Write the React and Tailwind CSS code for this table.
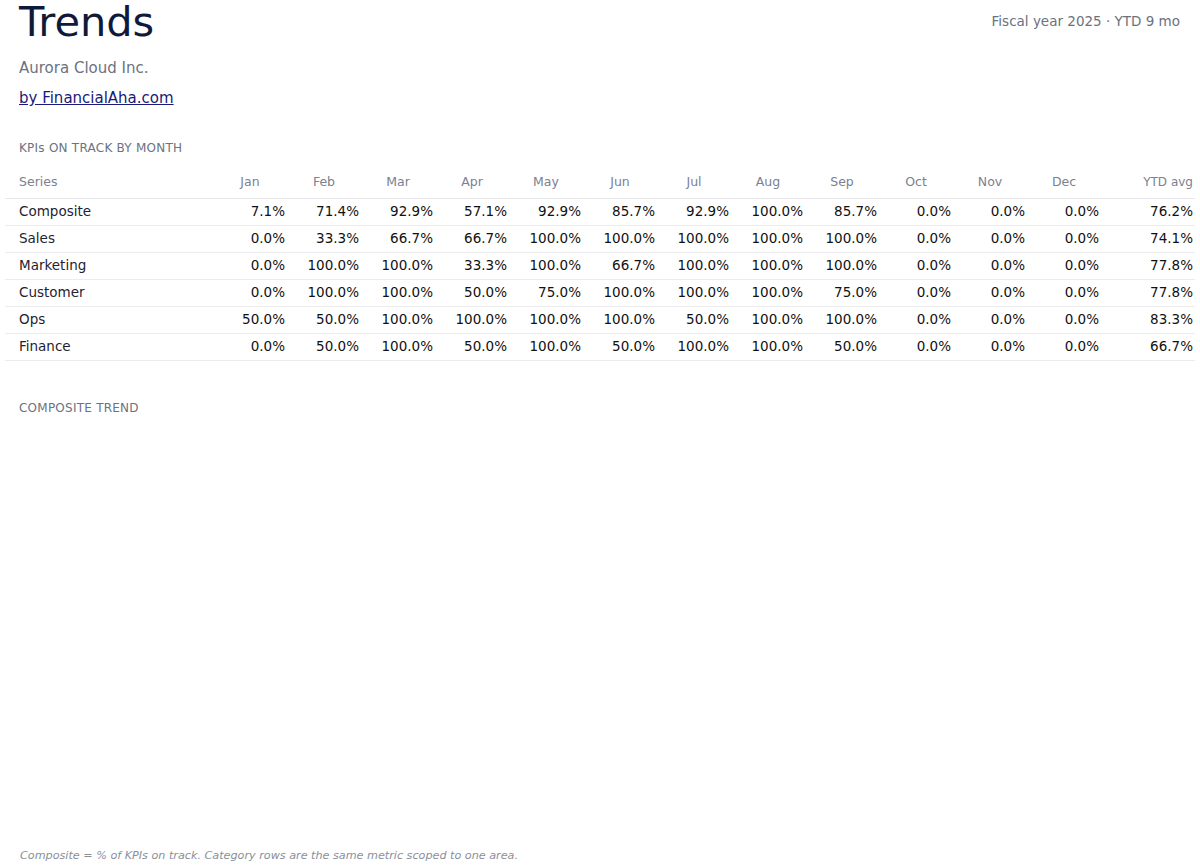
import React from "react";

const months = ["Jan","Feb","Mar","Apr","May","Jun","Jul","Aug","Sep","Oct","Nov","Dec"];
const rows = [
  ["Composite", ["7.1%","71.4%","92.9%","57.1%","92.9%","85.7%","92.9%","100.0%","85.7%","0.0%","0.0%","0.0%"], "76.2%"],
  ["Sales", ["0.0%","33.3%","66.7%","66.7%","100.0%","100.0%","100.0%","100.0%","100.0%","0.0%","0.0%","0.0%"], "74.1%"],
  ["Marketing", ["0.0%","100.0%","100.0%","33.3%","100.0%","66.7%","100.0%","100.0%","100.0%","0.0%","0.0%","0.0%"], "77.8%"],
  ["Customer", ["0.0%","100.0%","100.0%","50.0%","75.0%","100.0%","100.0%","100.0%","75.0%","0.0%","0.0%","0.0%"], "77.8%"],
  ["Ops", ["50.0%","50.0%","100.0%","100.0%","100.0%","100.0%","50.0%","100.0%","100.0%","0.0%","0.0%","0.0%"], "83.3%"],
  ["Finance", ["0.0%","50.0%","100.0%","50.0%","100.0%","50.0%","100.0%","100.0%","50.0%","0.0%","0.0%","0.0%"], "66.7%"],
];

export default function App() {
  return (
    <div className="px-5 bg-white min-h-[866px]" style={{ fontFamily: '"DejaVu Sans", sans-serif' }}>
      <div className="flex justify-between items-start">
        <h1 className="-ml-px text-[41.5px] leading-[44px] text-[#0f1a3a] font-normal">Trends</h1>
        <div className="pt-[11px] text-[13.5px] leading-5 text-[#6b7280]">Fiscal year 2025 · YTD 9 mo</div>
      </div>
      <div className="mt-[14px] -ml-px text-[15px] leading-5 text-[#6b7280]">Aurora Cloud Inc.</div>
      <div className="mt-[10px] -ml-px text-[15px] leading-5">
        <a href="#" className="text-[#1a1a7a] underline">by FinancialAha.com</a>
      </div>
      <div className="mt-[32px] -ml-px text-[12px] leading-4 text-[#6b7280] tracking-[0.02em]">KPIs ON TRACK BY MONTH</div>
      <div className="mt-[18px] -mx-[15px]">
        <table className="w-[1190px] table-fixed border-collapse">
          <colgroup>
            <col className="w-[208px]" />
            {months.map((m) => <col key={m} className="w-[74px]" />)}
            <col className="w-[94px]" />
          </colgroup>
          <thead>
            <tr className="border-b border-[#e8e8eb]">
              <th className="pl-[14px] pb-2 pt-0 text-[12.5px] leading-4 text-left font-normal text-[#7b8190]">Series</th>
              {months.map((m) => (
                <th key={m} className="px-[2px] pb-2 pt-0 text-[12.5px] leading-4 text-center font-normal text-[#7b8190]">{m}</th>
              ))}
              <th className="px-[2px] pb-2 pt-0 text-[12px] leading-4 text-right font-normal text-[#7b8190]">YTD avg</th>
            </tr>
          </thead>
          <tbody>
            {rows.map(([name, vals, ytd]) => (
              <tr key={name} className="border-b border-[#ececef]">
                <td className="pl-[14px] pt-[4px] pb-[6px] text-[13.5px] leading-4 text-left text-[#1f2430]">{name}</td>
                {vals.map((v, i) => (
                  <td key={i} className="px-[2px] pt-[4px] pb-[6px] text-[13.5px] leading-4 text-right text-[#111111]">{v}</td>
                ))}
                <td className="px-[2px] pt-[4px] pb-[6px] text-[13.5px] leading-4 text-right text-[#111111]">{ytd}</td>
              </tr>
            ))}
          </tbody>
        </table>
      </div>
      <div className="mt-[39px] -ml-px text-[12px] leading-4 text-[#6b7280] tracking-[0.02em]">COMPOSITE TREND</div>
      <div className="h-[432px]"></div>
      <div className="text-[11.2px] leading-4 italic text-[#8a8f99]">Composite = % of KPIs on track. Category rows are the same metric scoped to one area.</div>
    </div>
  );
}
